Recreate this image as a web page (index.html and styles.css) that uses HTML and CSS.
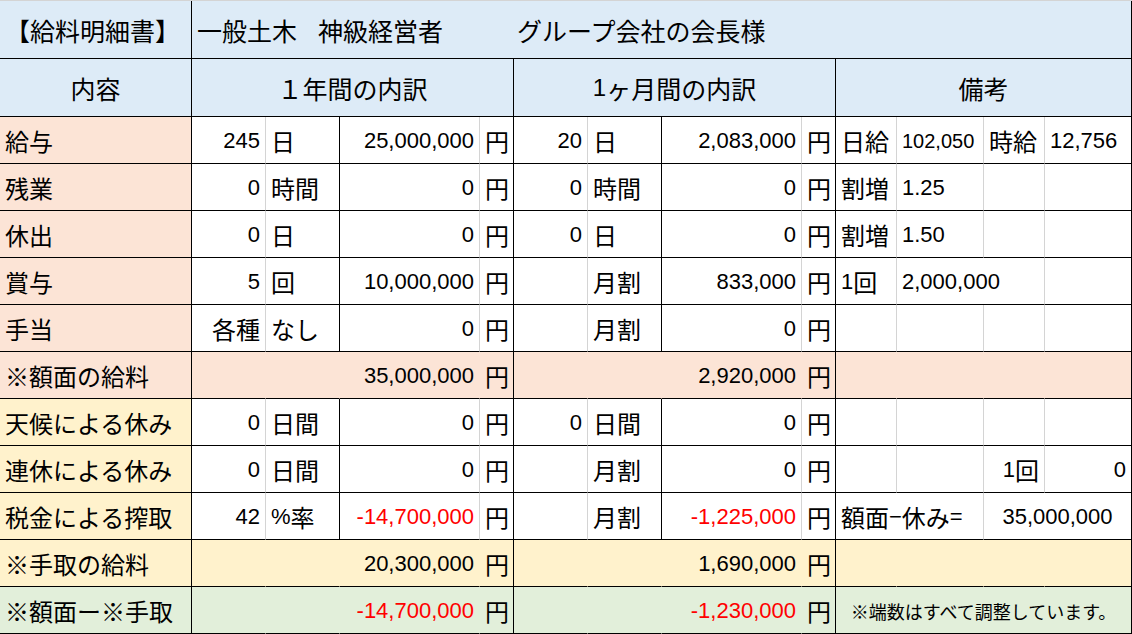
FILE: index.html
```html
<!DOCTYPE html>
<html lang="ja">
<head>
<meta charset="utf-8">
<title>給料明細書</title>
<link rel="stylesheet" href="styles.css">
</head>
<body>
<div class="sheet">
  <!-- title row -->
  <div class="c blue l title">【給料明細書】</div>
  <div class="c blue l title s12"><span>一般土木</span><span class="t2">神級経営者</span><span class="t3">グループ会社の会長様</span></div>

  <!-- header row -->
  <div class="c blue ctr head">内容</div>
  <div class="c blue ctr head s4">１年間の内訳</div>
  <div class="c blue ctr head s4"><span class="n">1</span>ヶ月間の内訳</div>
  <div class="c blue ctr head s4">備考</div>

  <!-- 給与 -->
  <div class="c pink l">給与</div>
  <div class="c g r n">245</div>
  <div class="c l">日</div>
  <div class="c g r n">25,000,000</div>
  <div class="c l">円</div>
  <div class="c g r n">20</div>
  <div class="c l">日</div>
  <div class="c g r n">2,083,000</div>
  <div class="c l">円</div>
  <div class="c g l">日給</div>
  <div class="c g l n sm">102,050</div>
  <div class="c g l">時給</div>
  <div class="c l n">12,756</div>

  <!-- 残業 -->
  <div class="c pink l">残業</div>
  <div class="c g r n">0</div>
  <div class="c l">時間</div>
  <div class="c g r n">0</div>
  <div class="c l">円</div>
  <div class="c g r n">0</div>
  <div class="c l">時間</div>
  <div class="c g r n">0</div>
  <div class="c l">円</div>
  <div class="c g l">割増</div>
  <div class="c g l n">1.25</div>
  <div class="c g l"></div>
  <div class="c l"></div>

  <!-- 休出 -->
  <div class="c pink l">休出</div>
  <div class="c g r n">0</div>
  <div class="c l">日</div>
  <div class="c g r n">0</div>
  <div class="c l">円</div>
  <div class="c g r n">0</div>
  <div class="c l">日</div>
  <div class="c g r n">0</div>
  <div class="c l">円</div>
  <div class="c g l">割増</div>
  <div class="c g l n">1.50</div>
  <div class="c g l"></div>
  <div class="c l"></div>

  <!-- 賞与 -->
  <div class="c pink l">賞与</div>
  <div class="c g r n">5</div>
  <div class="c l">回</div>
  <div class="c g r n">10,000,000</div>
  <div class="c l">円</div>
  <div class="c g r"></div>
  <div class="c l">月割</div>
  <div class="c g r n">833,000</div>
  <div class="c l">円</div>
  <div class="c g l"><span class="n">1</span>回</div>
  <div class="c g l n s2">2,000,000</div>
  <div class="c l"></div>

  <!-- 手当 -->
  <div class="c pink l">手当</div>
  <div class="c g r">各種</div>
  <div class="c l">なし</div>
  <div class="c g r n">0</div>
  <div class="c l">円</div>
  <div class="c g r"></div>
  <div class="c l">月割</div>
  <div class="c g r n">0</div>
  <div class="c l">円</div>
  <div class="c g l"></div>
  <div class="c g l"></div>
  <div class="c g l"></div>
  <div class="c l"></div>

  <!-- ※額面の給料 -->
  <div class="c pink l">※額面の給料</div>
  <div class="c pink h"></div>
  <div class="c pink h"></div>
  <div class="c pink h r n">35,000,000</div>
  <div class="c pink l">円</div>
  <div class="c pink h"></div>
  <div class="c pink h"></div>
  <div class="c pink h r n">2,920,000</div>
  <div class="c pink l">円</div>
  <div class="c pink h"></div>
  <div class="c pink h"></div>
  <div class="c pink h"></div>
  <div class="c pink"></div>

  <!-- 天候による休み -->
  <div class="c yellow l">天候による休み</div>
  <div class="c g r n">0</div>
  <div class="c l">日間</div>
  <div class="c g r n">0</div>
  <div class="c l">円</div>
  <div class="c g r n">0</div>
  <div class="c l">日間</div>
  <div class="c g r n">0</div>
  <div class="c l">円</div>
  <div class="c g l"></div>
  <div class="c g l"></div>
  <div class="c g l"></div>
  <div class="c l"></div>

  <!-- 連休による休み -->
  <div class="c yellow l">連休による休み</div>
  <div class="c g r n">0</div>
  <div class="c l">日間</div>
  <div class="c g r n">0</div>
  <div class="c l">円</div>
  <div class="c g r"></div>
  <div class="c l">月割</div>
  <div class="c g r n">0</div>
  <div class="c l">円</div>
  <div class="c g l"></div>
  <div class="c g l"></div>
  <div class="c g r"><span class="n">1</span>回</div>
  <div class="c r n">0</div>

  <!-- 税金による搾取 -->
  <div class="c yellow l">税金による搾取</div>
  <div class="c g r n">42</div>
  <div class="c l"><span class="n">%</span>率</div>
  <div class="c g r n red">-14,700,000</div>
  <div class="c l">円</div>
  <div class="c g r"></div>
  <div class="c l">月割</div>
  <div class="c g r n red">-1,225,000</div>
  <div class="c l">円</div>
  <div class="c g l s2">額面<span class="n">−</span>休み<span class="n">=</span></div>
  <div class="c ctr n s2">35,000,000</div>

  <!-- ※手取の給料 -->
  <div class="c yellow l">※手取の給料</div>
  <div class="c yellow h"></div>
  <div class="c yellow h"></div>
  <div class="c yellow h r n">20,300,000</div>
  <div class="c yellow l">円</div>
  <div class="c yellow h"></div>
  <div class="c yellow h"></div>
  <div class="c yellow h r n">1,690,000</div>
  <div class="c yellow l">円</div>
  <div class="c yellow h"></div>
  <div class="c yellow h"></div>
  <div class="c yellow h"></div>
  <div class="c yellow"></div>

  <!-- ※額面ー※手取 -->
  <div class="c green l">※額面ー※手取</div>
  <div class="c green h"></div>
  <div class="c green h"></div>
  <div class="c green h r n red">-14,700,000</div>
  <div class="c green l">円</div>
  <div class="c green h"></div>
  <div class="c green h"></div>
  <div class="c green h r n red">-1,230,000</div>
  <div class="c green l">円</div>
  <div class="c green ctr note s4">※端数はすべて調整しています。</div>
</div>
</body>
</html>
```

FILE: styles.css
```css
html, body {
  margin: 0;
  padding: 0;
  background: #ffffff;
}

.sheet {
  width: 1132px;
  display: grid;
  grid-template-columns: 192px 74px 74px 140px 34px 74px 74px 140px 34px 61px 87px 61px 87px;
  grid-template-rows: 58px 58px repeat(11, 47px);
  border-top: 1px solid #d4d4d4;
  font-family: "Noto Sans CJK JP", "Liberation Sans", sans-serif;
  font-size: 24px;
  color: #000000;
}

.c {
  box-sizing: border-box;
  border-right: 1px solid #000000;
  border-bottom: 1px solid #000000;
  background: #ffffff;
  display: flex;
  align-items: center;
  padding: 1px 5px 0 5px;
  white-space: nowrap;
  line-height: 30px;
  min-width: 0;
}

.c.g { border-right-color: #d4d4d4; }
.c.h { border-right-color: transparent; }

.l { justify-content: flex-start; }
.r { justify-content: flex-end; }
.ctr { justify-content: center; }

.n, .c.n {
  font-family: "Liberation Sans", "Noto Sans CJK JP", sans-serif;
  font-size: 22px;
}
.c.n.sm { font-size: 20px; }

.red { color: #ff0000; }

.blue { background: #ddebf7; }
.pink { background: #fce4d6; }
.yellow { background: #fff2cc; }
.green { background: #e2efda; }

.s2 { grid-column: span 2; }
.s4 { grid-column: span 4; }
.s12 { grid-column: span 12; }

.title { font-size: 25px; }
.title .t2 { margin-left: 21px; }
.title .t3 { margin-left: 74px; }

.head { font-size: 25px; }
.head .n { font-size: 24px; }

.note { font-size: 18px; }
```
